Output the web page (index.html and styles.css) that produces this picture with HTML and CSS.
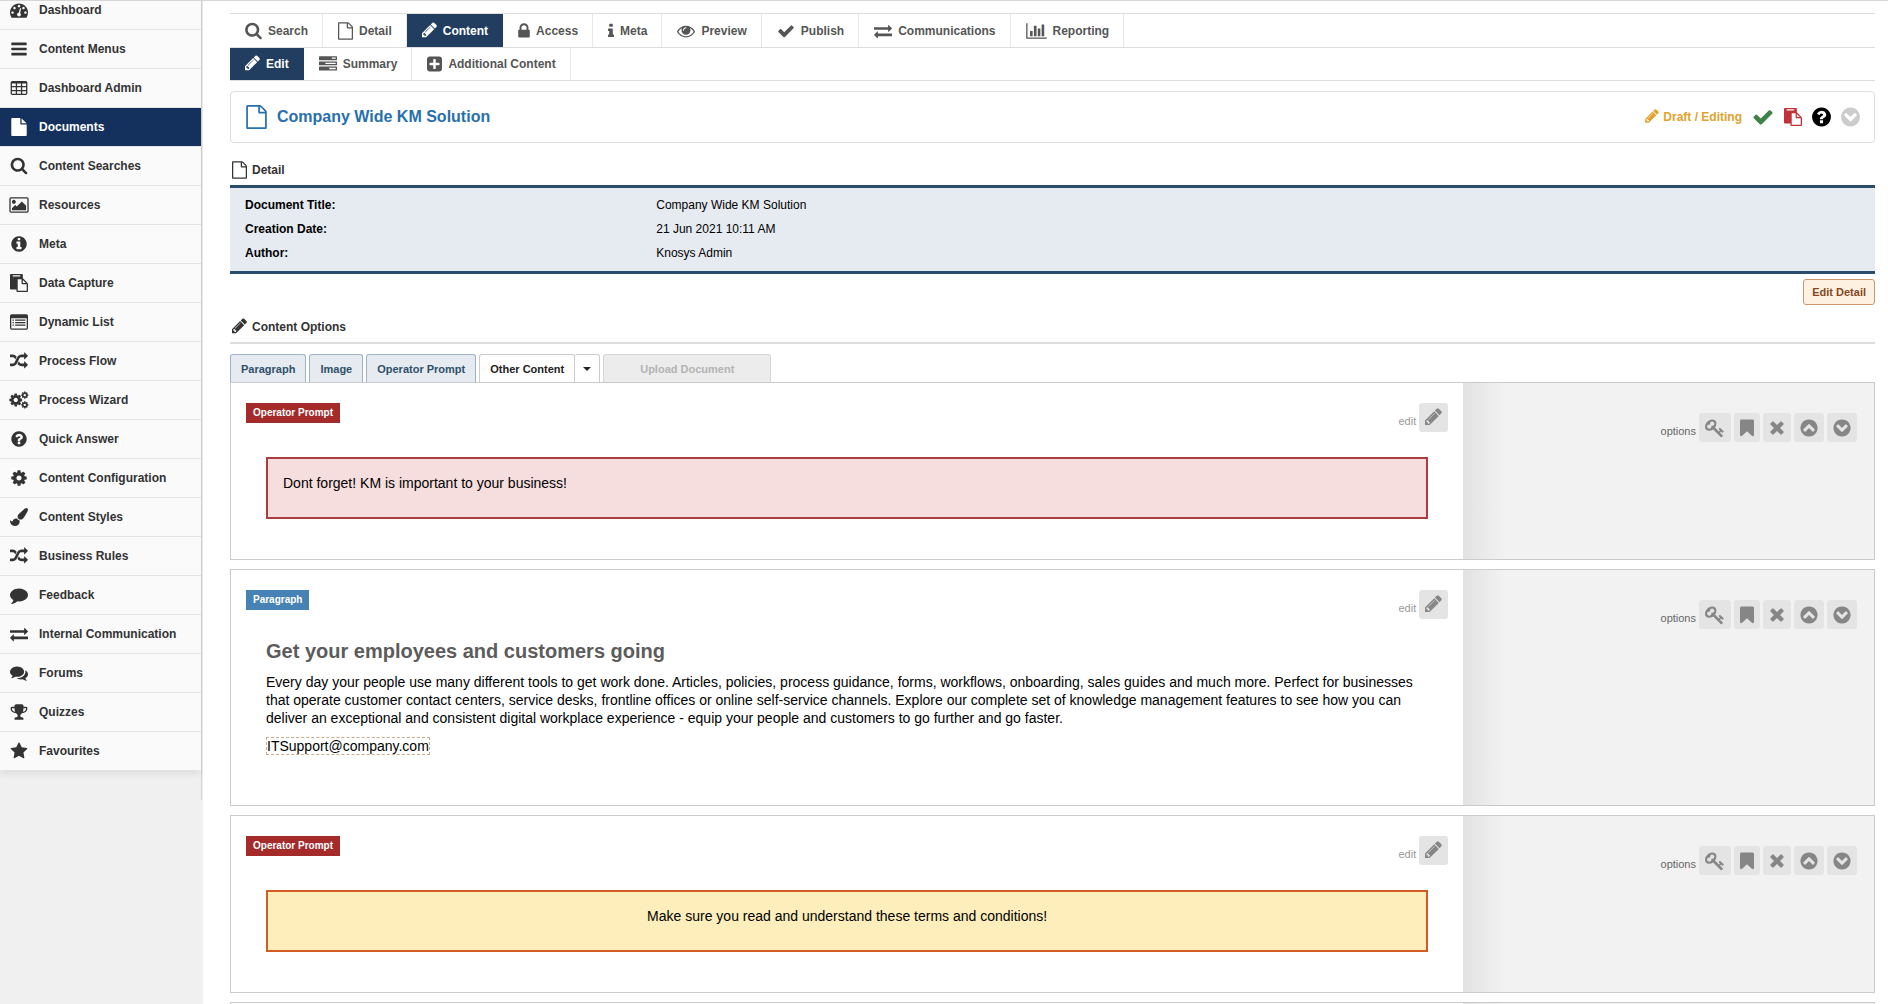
FILE: index.html
```html
<!DOCTYPE html>
<html lang="en">
<head>
  <meta charset="UTF-8">
  <meta name="viewport" content="width=device-width, initial-scale=1.0">
  <title>Company Wide KM Solution</title>
  <link rel="stylesheet" href="styles.css">
</head>
<body>
  <!-- icon sprite -->
  <svg class="sprite" aria-hidden="true">
    <symbol id="i-dashboard" viewBox="0 0 1792 1792"><path d="M384 1152q0-53-37.500-90.500t-90.500-37.500-90.500 37.500-37.500 90.500 37.500 90.500 90.500 37.500 90.500-37.500 37.500-90.500zm192-448q0-53-37.500-90.500t-90.500-37.500-90.500 37.500-37.500 90.500 37.500 90.500 90.500 37.500 90.500-37.500 37.500-90.500zm428 481l101-382q6-26-7.500-48.500t-38.500-29.500-48 6.500-30 39.500l-101 382q-60 5-107 43.500t-63 98.500q-20 77 20 146t117 89 146-20 89-117q16-60-6-117t-72-91zm660-33q0-53-37.500-90.500t-90.500-37.500-90.500 37.500-37.500 90.500 37.500 90.500 90.500 37.500 90.500-37.500 37.500-90.500zm-640-640q0-53-37.500-90.500t-90.500-37.500-90.500 37.500-37.500 90.500 37.500 90.500 90.500 37.500 90.500-37.500 37.500-90.500zm448 192q0-53-37.500-90.500t-90.500-37.500-90.500 37.500-37.500 90.500 37.500 90.500 90.500 37.500 90.500-37.500 37.500-90.500zm320 448q0 261-141 483-19 29-54 29h-1402q-35 0-54-29-141-221-141-483 0-182 71-348t191-286 286-191 348-71 348 71 286 191 191 286 71 348z"/></symbol>
    <symbol id="i-bars" viewBox="0 0 1792 1792"><path d="M1664 1344v128q0 26-19 45t-45 19h-1408q-26 0-45-19t-19-45v-128q0-26 19-45t45-19h1408q26 0 45 19t19 45zm0-512v128q0 26-19 45t-45 19h-1408q-26 0-45-19t-19-45v-128q0-26 19-45t45-19h1408q26 0 45 19t19 45zm0-512v128q0 26-19 45t-45 19h-1408q-26 0-45-19t-19-45v-128q0-26 19-45t45-19h1408q26 0 45 19t19 45z"/></symbol>
    <symbol id="i-table" viewBox="0 0 1792 1792"><path fill-rule="evenodd" d="M224 192h1344q66 0 113 47t47 113v1088q0 66-47 113t-113 47h-1344q-66 0-113-47t-47-113v-1088q0-66 47-113t113-47zM192 448v256h384v-256zM704 448v256h384v-256zM1216 448v256h384v-256zM192 832v256h384v-256zM704 832v256h384v-256zM1216 832v256h384v-256zM192 1216v256h384v-256zM704 1216v256h384v-256zM1216 1216v256h384v-256z"/></symbol>
    <symbol id="i-file" viewBox="128 0 1536 1792"><path d="M1152 512v-472q22 14 36 28l408 408q14 14 28 36h-472zm-128 32q0 40 28 68t68 28h544v1056q0 40-28 68t-68 28h-1344q-40 0-68-28t-28-68v-1600q0-40 28-68t68-28h800v544z"/></symbol>
    <symbol id="i-file-o" viewBox="128 0 1536 1792"><path d="M1596 380q28 28 48 76t20 88v1152q0 40-28 68t-68 28h-1344q-40 0-68-28t-28-68v-1600q0-40 28-68t68-28h896q40 0 88 20t76 48zm-444-244v376h376q-10-29-22-41l-313-313q-12-12-41-22zm384 1528v-1024h-416q-40 0-68-28t-28-68v-416h-768v1536h1280z"/></symbol>
    <symbol id="i-search" viewBox="64 64 1664 1792"><path d="M1216 832q0-185-131.500-316.500t-316.500-131.500-316.500 131.500-131.500 316.500 131.500 316.500 316.500 131.500 316.500-131.500 131.500-316.500zm512 832q0 52-38 90t-90 38q-54 0-90-38l-343-342q-179 124-399 124-143 0-273.500-55.500t-225-150-150-225-55.500-273.500 55.500-273.500 150-225 225-150 273.500-55.500 273.500 55.500 225 150 150 225 55.500 273.500q0 220-124 399l343 343q37 37 37 90z"/></symbol>
    <symbol id="i-image" viewBox="-64 0 1920 1792"><path d="M576 576q0 80-56 136t-136 56-136-56-56-136 56-136 136-56 136 56 56 136zm1024 384v448h-1408v-192l320-320 160 160 512-512zm96-704h-1600q-13 0-22.500 9.500t-9.500 22.500v1216q0 13 9.500 22.500t22.500 9.500h1600q13 0 22.500-9.500t9.500-22.500v-1216q0-13-9.500-22.500t-22.500-9.500zm160 32v1216q0 66-47 113t-113 47h-1600q-66 0-113-47t-47-113v-1216q0-66 47-113t113-47h1600q66 0 113 47t47 113z"/></symbol>
    <symbol id="i-info-circle" viewBox="128 0 1536 1792"><path d="M1152 1376v-160q0-14-9-23t-23-9h-96v-512q0-14-9-23t-23-9h-320q-14 0-23 9t-9 23v160q0 14 9 23t23 9h96v320h-96q-14 0-23 9t-9 23v160q0 14 9 23t23 9h448q14 0 23-9t9-23zm-128-896v-160q0-14-9-23t-23-9h-192q-14 0-23 9t-9 23v160q0 14 9 23t23 9h192q14 0 23-9t9-23zm640 416q0 209-103 385.500t-279.500 279.500-385.500 103-385.500-103-279.500-279.500-103-385.500 103-385.500 279.500-279.500 385.500-103 385.500 103 279.500 279.500 103 385.500z"/></symbol>
    <symbol id="i-paste" viewBox="0 0 1792 1792"><path d="M768 1664h896v-640h-416q-40 0-68-28t-28-68v-416h-384v1152zm256-1440v-64q0-13-9.500-22.500t-22.500-9.500h-704q-13 0-22.500 9.500t-9.500 22.500v64q0 13 9.500 22.500t22.500 9.500h704q13 0 22.500-9.500t9.500-22.500zm256 672h299l-299-299v299zm512 128v672q0 40-28 68t-68 28h-960q-40 0-68-28t-28-68v-160h-544q-40 0-68-28t-28-68v-1344q0-40 28-68t68-28h1088q40 0 68 28t28 68v328q21 13 36 28l408 408q28 28 48 76t20 88z"/></symbol>
    <symbol id="i-list" viewBox="0 0 1792 1792"><path fill-rule="evenodd" d="M160 128h1472q66 0 113 47t47 113v1216q0 66-47 113t-113 47h-1472q-66 0-113-47t-47-113v-1216q0-66 47-113t113-47zM128 512v992q0 32 32 32h1472q32 0 32-32v-992zM256 640h128v128h-128zM256 896h128v128h-128zM256 1152h128v128h-128zM512 640h1024v128h-1024zM512 896h1024v128h-1024zM512 1152h1024v128h-1024z"/></symbol>
    <symbol id="i-random" viewBox="0 0 1792 1792"><path d="M666 481q-60 92-137 273-22-45-37-72.500t-40.500-63.500-51-56.500-63-35-81.500-14.500h-224q-14 0-23-9t-9-23v-192q0-14 9-23t23-9h224q250 0 410 225zm1126 799q0 14-9 23l-320 320q-9 9-23 9-13 0-22.500-9.500t-9.500-22.500v-192q-32 0-85 .5t-81 1-73-1-71-5-64-10.500-63-18.500-58-28.500-59-40-55-53.500-56-69.500q59-93 136-273 22 45 37 72.500t40.500 63.500 51 56.500 63 35 81.500 14.500h256v-192q0-14 9-23t23-9q12 0 24 10l319 319q9 9 9 23zm0-896q0 14-9 23l-320 320q-9 9-23 9-13 0-22.500-9.500t-9.500-22.500v-192h-256q-48 0-87 15t-69 45-51 61.500-45 77.500q-32 62-78 171-29 66-49.500 111t-54 105-64 100-74 83-90 68.500-106.500 42-128 16.500h-224q-14 0-23-9t-9-23v-192q0-14 9-23t23-9h224q48 0 87-15t69-45 51-61.500 45-77.500q32-62 78-171 29-66 49.500-111t54-105 64-100 74-83 90-68.500 106.500-42 128-16.500h256v-192q0-14 9-23t23-9q12 0 24 10l319 319q9 9 9 23z"/></symbol>
    <symbol id="i-cog" viewBox="128 0 1536 1792"><path id="cog-shape" d="M1152 896q0-106-75-181t-181-75-181 75-75 181 75 181 181 75 181-75 75-181zm512-109v222q0 12-8 23t-20 13l-185 28q-19 54-39 91 35 50 107 138 10 12 10 25t-9 23q-27 37-99 108t-94 71q-12 0-26-9l-138-108q-44 23-91 38-16 136-29 186-7 28-36 28h-222q-14 0-24.500-8.500t-11.500-21.500l-28-184q-49-16-90-37l-141 107q-10 9-25 9-14 0-25-11-126-114-165-168-7-10-7-23 0-12 8-23 15-21 51-66.500t54-70.500q-27-50-41-99l-183-27q-13-2-21-12.500t-8-23.500v-222q0-12 8-23t19-13l186-28q14-46 39-92-40-57-107-138-10-12-10-24 0-10 9-23 26-36 98.500-107.500t94.500-71.500q13 0 26 10l138 107q44-23 91-38 16-136 29-186 7-28 36-28h222q14 0 24.500 8.500t11.500 21.500l28 184q49 16 90 37l142-107q9-9 24-9 13 0 25 10 129 119 165 170 7 8 7 22 0 12-8 23-15 21-51 66.500t-54 70.500q26 50 41 98l183 28q13 2 21 12.500t8 23.500z"/></symbol>
    <symbol id="i-cogs" viewBox="0 0 1920 1792"><use href="#cog-shape" transform="translate(-107 150) scale(.83)"/><use href="#cog-shape" transform="translate(1114 -12) scale(.47)"/><use href="#cog-shape" transform="translate(1114 960) scale(.47)"/></symbol>
    <symbol id="i-question" viewBox="128 0 1536 1792"><path d="M1024 1376v-192q0-14-9-23t-23-9h-192q-14 0-23 9t-9 23v192q0 14 9 23t23 9h192q14 0 23-9t9-23zm256-672q0-88-55.500-163t-138.500-116-170-41q-243 0-371 213-15 24 8 42l132 100q7 6 19 6 16 0 25-12 53-68 86-92 34-24 86-24 48 0 85.500 26t37.500 59q0 38-20 61t-68 45q-63 28-115.500 86.500t-52.500 125.500v36q0 14 9 23t23 9h192q14 0 23-9t9-23q0-19 21.500-49.500t54.500-49.500q32-18 49-28.500t46-35 44.500-48 28-60.500 12.500-81zm384 192q0 209-103 385.500t-279.500 279.500-385.500 103-385.500-103-279.500-279.500-103-385.500 103-385.500 279.500-279.500 385.500-103 385.500 103 279.500 279.500 103 385.500z"/></symbol>
    <symbol id="i-brush" viewBox="0 0 1792 1792"><path d="M1615 0q70 0 122.500 46.500t52.500 116.500q0 63-45 151-332 629-465 752-97 91-218 91-126 0-216.500-92.500t-90.500-219.500q0-128 92-212l638-579q59-54 130-54zm-909 1034q39 76 106.500 130t150.500 76l1 71q4 213-129.500 347t-348.500 134q-123 0-218-46.500t-152.500-127.500-86.500-183-29-220q7 5 41 30t62 44.500 59 36.500 46 17q41 0 55-37 25-66 57.500-112.500t69.500-76 88-47.500 103-25.500 125-10.500z"/></symbol>
    <symbol id="i-comment" viewBox="0 0 1792 1792"><path d="M1792 896q0 174-120 321.500t-326 233-450 85.500q-70 0-145-8-198 175-460 242-49 14-114 22-17 2-30.500-9t-17.500-29v-1q-3-4-.5-12t2-10 4.500-9.500l6-9 7-8.500 8-9q7-8 31-34.500t34.500-38 31-39.500 32.500-51 27-59 26-76q-157-89-247.500-220t-90.500-281q0-130 71-248.500t191-204.500 286-136.500 348-50.500q244 0 450 85.500t326 233 120 321.500z"/></symbol>
    <symbol id="i-comments" viewBox="0 0 1792 1792"><path d="M1408 768q0 139-94 257t-256.500 186.500-353.500 68.500q-86 0-176-16-124 88-278 128-36 9-86 16h-3q-11 0-20.500-8t-11.500-21q-1-3-1-6.500t.5-6.500 2-6l2.500-5 3.500-5.500 4-5 4.500-5 4-4.500q5-6 23-25t26-29.500 22.500-29 25-38.500 20.500-44q-124-72-195-177t-71-224q0-139 94-257t256.500-186.500 353.500-68.500 353.500 68.500 256.500 186.500 94 257zm384 256q0 120-71 224.500t-195 176.500q10 24 20.500 44t25 38.500 22.500 29 26 29.500 23 25q1 1 4 4.500t4.500 5 4 5 3.500 5.500l2.500 5 2 6 .5 6.500-1 6.500q-3 14-13 22t-22 7q-50-7-86-16-154-40-278-128-90 16-176 16-271 0-472-132 58 4 88 4 161 0 309-45t264-129q125-92 192-212t67-254q0-77-23-152 129 71 204 178t75 230z"/></symbol>
    <symbol id="i-exchange" viewBox="0 0 1792 1792"><path d="M1792 1184v192q0 13-9.500 22.500t-22.500 9.500h-1376v192q0 13-9.500 22.500t-22.500 9.500q-12 0-24-10l-319-320q-9-9-9-22 0-14 9-23l320-320q9-9 23-9 13 0 22.500 9.500t9.500 22.500v192h1376q13 0 22.500 9.500t9.500 22.500zm0-544q0 14-9 23l-320 320q-9 9-23 9-13 0-22.500-9.500t-9.500-22.500v-192h-1376q-13 0-22.500-9.500t-9.500-22.500v-192q0-13 9.500-22.500t22.500-9.500h1376v-192q0-14 9-23t23-9q12 0 24 10l319 319q9 9 9 23z"/></symbol>
    <symbol id="i-trophy" viewBox="64 0 1664 1792"><path d="M522 883q-74-162-74-371h-256v96q0 78 94.500 162t235.500 113zm1078-275v-96h-256q0 209-74 371 141-29 235.500-113t94.500-162zm128-128v128q0 71-41.500 143t-112 130-173 97.500-215.500 44.500q-42 54-95 95-38 34-52.500 72.500t-14.500 89.500q0 54 30.500 91t97.500 37q75 0 133.500 45.500t58.500 114.500v64q0 14-9 23t-23 9h-832q-14 0-23-9t-9-23v-64q0-69 58.500-114.500t133.500-45.500q67 0 97.500-37t30.500-91q0-51-14.500-89.500t-52.500-72.500q-53-41-95-95-113-5-215.500-44.500t-173-97.500-112-130-41.500-143v-128q0-40 28-68t68-28h288v-96q0-66 47-113t113-47h576q66 0 113 47t47 113v96h288q40 0 68 28t28 68z"/></symbol>
    <symbol id="i-star" viewBox="64 0 1664 1792"><path d="M1728 647q0 22-26 48l-363 354 86 500q1 7 1 20 0 21-10.500 35.500t-30.500 14.500q-19 0-40-12l-449-236-449 236q-22 12-40 12-21 0-31.500-14.500t-10.500-35.500q0-6 2-20l86-500-364-354q-25-27-25-48 0-37 56-46l502-73 225-455q19-41 49-41t49 41l225 455 502 73q56 9 56 46z"/></symbol>
    <symbol id="i-pencil" viewBox="128 128 1536 1792"><path d="M491 1536l91-91-235-235-91 91v107h128v128h107zm523-928q0-22-22-22-10 0-17 7l-542 542q-7 7-7 17 0 22 22 22 10 0 17-7l542-542q7-7 7-17zm-54-192l416 416-832 832h-416v-416zm683 96q0 53-37 90l-166 166-416-416 166-165q36-38 90-38 53 0 91 38l235 234q37 39 37 91z"/></symbol>
    <symbol id="i-lock" viewBox="320 0 1152 1792"><path d="M640 768h512v-192q0-106-75-181t-181-75-181 75-75 181v192zm832 96v576q0 40-28 68t-68 28h-960q-40 0-68-28t-28-68v-576q0-40 28-68t68-28h32v-192q0-184 132-316t316-132 316 132 132 316v192h32q40 0 68 28t28 68z"/></symbol>
    <symbol id="i-info" viewBox="576 0 640 1792"><path d="M1216 1344v128q0 26-19 45t-45 19h-512q-26 0-45-19t-19-45v-128q0-26 19-45t45-19h64v-384h-64q-26 0-45-19t-19-45v-128q0-26 19-45t45-19h384q26 0 45 19t19 45v576h64q26 0 45 19t19 45zm-128-1152v192q0 26-19 45t-45 19h-256q-26 0-45-19t-19-45v-192q0-26 19-45t45-19h256q26 0 45 19t19 45z"/></symbol>
    <symbol id="i-eye" viewBox="0 0 1792 1792"><path d="M1664 960q-152-236-381-353 61 104 61 225 0 185-131.500 316.500t-316.500 131.500-316.500-131.500-131.500-316.500q0-121 61-225-229 117-381 353 133 205 333.500 326.500t434.500 121.500 434.500-121.500 333.500-326.500zm-720-384q0-20-14-34t-34-14q-125 0-214.500 89.500t-89.500 214.500q0 20 14 34t34 14 34-14 14-34q0-86 61-147t147-61q20 0 34-14t14-34zm848 384q0 34-20 69-140 230-376.500 368.500t-499.500 138.500-499.500-139-376.500-368q-20-35-20-69t20-69q140-229 376.500-368t499.500-139 499.500 139 376.500 368q20 35 20 69z"/></symbol>
    <symbol id="i-check" viewBox="0 0 1792 1792"><path d="M1671 566q0 40-28 68l-724 724-136 136q-28 28-68 28t-68-28l-136-136-362-362q-28-28-28-68t28-68l136-136q28-28 68-28t68 28l294 295 656-657q28-28 68-28t68 28l136 136q28 28 28 68z"/></symbol>
    <symbol id="i-chart" viewBox="0 0 2048 1792"><path d="M640 896v512h-256v-512h256zm384-512v1024h-256v-1024h256zm1024 1152v128h-2048v-1536h128v1408h1920zm-640-896v768h-256v-768h256zm384-384v1152h-256v-1152h256z"/></symbol>
    <symbol id="i-tasks" viewBox="0 0 1792 1792"><path d="M1024 1408h640v-128h-640v128zm-384-512h1024v-128h-1024v128zm640-512h384v-128h-384v128zm512 832v256q0 26-19 45t-45 19h-1664q-26 0-45-19t-19-45v-256q0-26 19-45t45-19h1664q26 0 45 19t19 45zm0-512v256q0 26-19 45t-45 19h-1664q-26 0-45-19t-19-45v-256q0-26 19-45t45-19h1664q26 0 45 19t19 45zm0-512v256q0 26-19 45t-45 19h-1664q-26 0-45-19t-19-45v-256q0-26 19-45t45-19h1664q26 0 45 19t19 45z"/></symbol>
    <symbol id="i-plus" viewBox="128 0 1536 1792"><path d="M1408 960v-128q0-26-19-45t-45-19h-320v-320q0-26-19-45t-45-19h-128q-26 0-45 19t-19 45v320h-320q-26 0-45 19t-19 45v128q0 26 19 45t45 19h320v320q0 26 19 45t45 19h128q26 0 45-19t19-45v-320h320q26 0 45-19t19-45zm256-544v960q0 119-84.500 203.500t-203.500 84.500h-960q-119 0-203.500-84.500t-84.500-203.500v-960q0-119 84.500-203.500t203.500-84.500h960q119 0 203.500 84.500t84.500 203.500z"/></symbol>
    <symbol id="i-key" viewBox="0 0 1792 1792"><path d="M832 512q0-80-56-136t-136-56-136 56-56 136q0 42 19 83-41-19-83-19-80 0-136 56t-56 136 56 136 136 56 136-56 56-136q0-42-19-83 41 19 83 19 80 0 136-56t56-136zm851 704q0 17-49 66t-66 49q-9 0-28.500-16t-36.500-33-38.500-40-24.500-26l-96 96 220 220q28 28 28 68 0 42-39 81t-81 39q-40 0-68-28l-671-671q-176 131-365 131-163 0-265.500-102.500t-102.500-265.500q0-160 95-313t248-248 313-95q163 0 265.500 102.500t102.500 265.500q0 189-131 365l355 355 96-96q-3-3-26-24.500t-40-38.500-33-36.500-16-28.500q0-17 49-66t66-49q13 0 23 10 6 6 46 44.500t82 79.500 86.500 86 73 78 28.500 41z"/></symbol>
    <symbol id="i-bookmark" viewBox="256 0 1280 1792"><path d="M1420 128q23 0 44 9 33 13 52.500 41t19.500 62v1289q0 34-19.500 62t-52.500 41q-19 8-44 8-48 0-83-32l-441-424-441 424q-36 33-83 33-23 0-44-9-33-13-52.500-41t-19.500-62v-1289q0-34 19.500-62t52.500-41q21-9 44-9h1048z"/></symbol>
    <symbol id="i-times" viewBox="192 64 1408 1792"><path d="M1490 1322q0 40-28 68l-136 136q-28 28-68 28t-68-28l-294-294-294 294q-28 28-68 28t-68-28l-136-136q-28-28-28-68t28-68l294-294-294-294q-28-28-28-68t28-68l136-136q28-28 68-28t68 28l294 294 294-294q28-28 68-28t68 28l136 136q28 28 28 68t-28 68l-294 294 294 294q28 28 28 68z"/></symbol>
    <symbol id="i-down" viewBox="128 0 1536 1792"><path id="chevron-shape" d="M941 1236l454-454q19-19 19-45t-19-45l-102-102q-19-19-45-19t-45 19l-307 307-307-307q-19-19-45-19t-45 19l-102 102q-19 19-19 45t19 45l454 454q19 19 45 19t45-19zm723-340q0 209-103 385.500t-279.500 279.500-385.500 103-385.500-103-279.500-279.500-103-385.500 103-385.500 279.500-279.500 385.500-103 385.500 103 279.500 279.500 103 385.500z"/></symbol>
    <symbol id="i-up" viewBox="128 0 1536 1792"><use href="#chevron-shape" transform="rotate(180 896 896)"/></symbol>
  </svg>

  <div class="page">
    <aside class="sidebar">
      <nav class="side-nav">
        <ul>
          <li><a href="#"><svg><use href="#i-dashboard"/></svg>Dashboard</a></li>
          <li><a href="#"><svg><use href="#i-bars"/></svg>Content Menus</a></li>
          <li><a href="#"><svg><use href="#i-table"/></svg>Dashboard Admin</a></li>
          <li class="active"><a href="#"><svg><use href="#i-file"/></svg>Documents</a></li>
          <li><a href="#"><svg><use href="#i-search"/></svg>Content Searches</a></li>
          <li><a href="#"><svg><use href="#i-image"/></svg>Resources</a></li>
          <li><a href="#"><svg><use href="#i-info-circle"/></svg>Meta</a></li>
          <li><a href="#"><svg><use href="#i-paste"/></svg>Data Capture</a></li>
          <li><a href="#"><svg><use href="#i-list"/></svg>Dynamic List</a></li>
          <li><a href="#"><svg><use href="#i-random"/></svg>Process Flow</a></li>
          <li><a href="#"><svg><use href="#i-cogs"/></svg>Process Wizard</a></li>
          <li><a href="#"><svg><use href="#i-question"/></svg>Quick Answer</a></li>
          <li><a href="#"><svg><use href="#i-cog"/></svg>Content Configuration</a></li>
          <li><a href="#"><svg><use href="#i-brush"/></svg>Content Styles</a></li>
          <li><a href="#"><svg><use href="#i-random"/></svg>Business Rules</a></li>
          <li><a href="#"><svg><use href="#i-comment"/></svg>Feedback</a></li>
          <li><a href="#"><svg><use href="#i-exchange"/></svg>Internal Communication</a></li>
          <li><a href="#"><svg><use href="#i-comments"/></svg>Forums</a></li>
          <li><a href="#"><svg><use href="#i-trophy"/></svg>Quizzes</a></li>
          <li><a href="#"><svg><use href="#i-star"/></svg>Favourites</a></li>
        </ul>
      </nav>
    </aside>

    <main class="main">
      <nav class="tabs">
        <a href="#"><svg class="w17"><use href="#i-search"/></svg>Search</a>
        <a href="#"><svg class="w15"><use href="#i-file-o"/></svg>Detail</a>
        <a href="#" class="active"><svg class="w15"><use href="#i-pencil"/></svg>Content</a>
        <a href="#"><svg class="w12"><use href="#i-lock"/></svg>Access</a>
        <a href="#"><svg class="w6"><use href="#i-info"/></svg>Meta</a>
        <a href="#"><svg><use href="#i-eye"/></svg>Preview</a>
        <a href="#"><svg><use href="#i-check"/></svg>Publish</a>
        <a href="#"><svg><use href="#i-exchange"/></svg>Communications</a>
        <a href="#"><svg class="w21"><use href="#i-chart"/></svg>Reporting</a>
      </nav>
      <nav class="tabs sub-tabs">
        <a href="#" class="active"><svg class="w15"><use href="#i-pencil"/></svg>Edit</a>
        <a href="#"><svg><use href="#i-tasks"/></svg>Summary</a>
        <a href="#"><svg class="w15"><use href="#i-plus"/></svg>Additional Content</a>
      </nav>

      <header class="title-bar">
        <h1><svg><use href="#i-file-o"/></svg>Company Wide KM Solution</h1>
        <div class="status">
          <span class="draft"><svg><use href="#i-pencil"/></svg>Draft / Editing</span>
          <button type="button" class="s-check" aria-label="Approve"><svg><use href="#i-check"/></svg></button>
          <button type="button" class="s-paste" aria-label="Copy"><svg><use href="#i-paste"/></svg></button>
          <button type="button" class="s-help" aria-label="Help"><svg><use href="#i-question"/></svg></button>
          <button type="button" class="s-more" aria-label="More"><svg><use href="#i-down"/></svg></button>
        </div>
      </header>

      <section class="detail">
        <h2 class="section-title"><svg><use href="#i-file-o"/></svg>Detail</h2>
        <dl>
          <dt>Document Title:</dt><dd>Company Wide KM Solution</dd>
          <dt>Creation Date:</dt><dd>21 Jun 2021 10:11 AM</dd>
          <dt>Author:</dt><dd>Knosys Admin</dd>
        </dl>
        <div class="detail-actions">
          <button type="button" class="btn-edit-detail">Edit Detail</button>
        </div>
      </section>

      <section class="options">
        <h2 class="section-title"><svg><use href="#i-pencil"/></svg>Content Options</h2>
        <div class="content-tabs">
          <button type="button">Paragraph</button>
          <button type="button">Image</button>
          <button type="button">Operator Prompt</button>
          <div class="split">
            <button type="button">Other Content</button>
            <button type="button" class="toggle" aria-label="More content types"><span class="caret"></span></button>
          </div>
          <button type="button" class="upload" disabled>Upload Document</button>
        </div>

        <article class="block">
          <div class="block-content">
            <div class="block-head">
              <span class="badge badge-prompt">Operator Prompt</span>
              <div class="tools"><span>edit</span><button type="button" aria-label="edit"><svg class="w17"><use href="#i-pencil"/></svg></button></div>
            </div>
            <div class="block-body">
              <div class="prompt prompt-red">Dont forget! KM is important to your business!</div>
            </div>
          </div>
          <div class="block-side">
            <div class="tools">
              <span>options</span>
              <button type="button" aria-label="Keywords"><svg class="w20"><use href="#i-key"/></svg></button>
              <button type="button" aria-label="Bookmark"><svg class="w14"><use href="#i-bookmark"/></svg></button>
              <button type="button" aria-label="Delete"><svg class="w16"><use href="#i-times"/></svg></button>
              <button type="button" aria-label="Move up"><svg><use href="#i-up"/></svg></button>
              <button type="button" aria-label="Move down"><svg><use href="#i-down"/></svg></button>
            </div>
          </div>
        </article>

        <article class="block">
          <div class="block-content">
            <div class="block-head">
              <span class="badge badge-paragraph">Paragraph</span>
              <div class="tools"><span>edit</span><button type="button" aria-label="edit"><svg class="w17"><use href="#i-pencil"/></svg></button></div>
            </div>
            <div class="block-body">
              <h3>Get your employees and customers going</h3>
              <p>Every day your people use many different tools to get work done. Articles, policies, process guidance, forms, workflows, onboarding, sales guides and much more. Perfect for businesses that operate customer contact centers, service desks, frontline offices or online self-service channels. Explore our complete set of knowledge management features to see how you can deliver an exceptional and consistent digital workplace experience - equip your people and customers to go further and go faster.</p>
              <p><a class="email" href="mailto:ITSupport@company.com">ITSupport@company.com</a></p>
            </div>
          </div>
          <div class="block-side">
            <div class="tools">
              <span>options</span>
              <button type="button" aria-label="Keywords"><svg class="w20"><use href="#i-key"/></svg></button>
              <button type="button" aria-label="Bookmark"><svg class="w14"><use href="#i-bookmark"/></svg></button>
              <button type="button" aria-label="Delete"><svg class="w16"><use href="#i-times"/></svg></button>
              <button type="button" aria-label="Move up"><svg><use href="#i-up"/></svg></button>
              <button type="button" aria-label="Move down"><svg><use href="#i-down"/></svg></button>
            </div>
          </div>
        </article>

        <article class="block">
          <div class="block-content">
            <div class="block-head">
              <span class="badge badge-prompt">Operator Prompt</span>
              <div class="tools"><span>edit</span><button type="button" aria-label="edit"><svg class="w17"><use href="#i-pencil"/></svg></button></div>
            </div>
            <div class="block-body">
              <div class="prompt prompt-yellow">Make sure you read and understand these terms and conditions!</div>
            </div>
          </div>
          <div class="block-side">
            <div class="tools">
              <span>options</span>
              <button type="button" aria-label="Keywords"><svg class="w20"><use href="#i-key"/></svg></button>
              <button type="button" aria-label="Bookmark"><svg class="w14"><use href="#i-bookmark"/></svg></button>
              <button type="button" aria-label="Delete"><svg class="w16"><use href="#i-times"/></svg></button>
              <button type="button" aria-label="Move up"><svg><use href="#i-up"/></svg></button>
              <button type="button" aria-label="Move down"><svg><use href="#i-down"/></svg></button>
            </div>
          </div>
        </article>

        <article class="block">
          <div class="block-content"></div>
          <div class="block-side"></div>
        </article>
      </section>
    </main>
  </div>
</body>
</html>
```

FILE: styles.css
```css
* {
  box-sizing: border-box;
}
body {
  margin: 0;
  height: 100vh;
  overflow: hidden;
  font-family: Arial, "Liberation Sans", sans-serif;
  font-size: 12px;
  color: #000;
  background-color: #fff;
}
h1, h2, h3, p, ul, dl, dd {
  margin: 0;
  padding: 0;
}
a {
  color: inherit;
  text-decoration: none;
}
button {
  font-family: inherit;
  margin: 0;
  padding: 0;
  border: none;
  background: none;
  cursor: pointer;
}
svg {
  display: block;
  flex: none;
  width: 18px;
  height: 18px;
  fill: currentColor;
}
.sprite {
  display: none;
}
.w6 { width: 6px; }
.w12 { width: 12px; }
.w14 { width: 14px; }
.w15 { width: 15px; }
.w16 { width: 16px; }
.w17 { width: 17px; }
.w20 { width: 20px; }
.w21 { width: 21px; }
.page {
  display: flex;
  height: 100%;
  border-top: 1px solid #d6d6d8;
}

/* Sidebar */
.sidebar {
  flex: none;
  width: 203px;
  overflow: hidden;
  background-color: #f0f0f0;
}
.side-nav {
  width: 202px;
  margin-top: -10px;
  padding-bottom: 30px;
  border-right: 1px solid #d4d4d4;
}
.side-nav ul {
  list-style: none;
  background-color: #fafafa;
  box-shadow: 0 4px 8px rgba(0, 0, 0, 0.08);
}
.side-nav li {
  border-bottom: 1px solid #e4e5e6;
}
.side-nav li:last-child {
  border-bottom: none;
}
.side-nav a {
  display: flex;
  align-items: center;
  gap: 10px;
  height: 38px;
  padding-left: 9px;
  font-weight: bold;
  color: #333;
}
.side-nav svg {
  width: 20px;
}
.side-nav .active a {
  color: #fff;
  background-color: #14315e;
}

/* Top navigation */
.main {
  flex: 1;
  min-width: 0;
  overflow: hidden;
  padding: 12px 13px 0 27px;
}
.tabs {
  display: flex;
  border-top: 1px solid #ddd;
  border-bottom: 1px solid #ddd;
}
.sub-tabs {
  border-top: none;
}
.tabs a {
  display: flex;
  align-items: center;
  gap: 6px;
  height: 33px;
  padding: 0 14px 0 15px;
  border-right: 1px solid #e8e8e8;
  font-weight: bold;
  color: #555;
}
.sub-tabs a {
  height: 32px;
}
.tabs .active {
  color: #fff;
  background-color: #213e60;
  border-right-color: #213e60;
}

/* Document title */
.title-bar {
  display: flex;
  align-items: center;
  justify-content: space-between;
  height: 52px;
  margin-top: 10px;
  padding: 0 14px 0 15px;
  border: 1px solid #ddd;
  border-radius: 4px;
}
.title-bar h1 {
  display: flex;
  align-items: center;
  gap: 10px;
  font-size: 16px;
  color: #286fad;
}
.title-bar h1 svg {
  width: 21px;
  height: 24px;
}
.status {
  display: flex;
  align-items: center;
  gap: 10px;
}
.draft {
  display: flex;
  align-items: center;
  gap: 4px;
  font-weight: bold;
  color: #e0a32c;
}
.draft svg {
  width: 14px;
  height: 16px;
}
.status button svg {
  width: 19px;
  height: 22px;
}
.status .s-check svg {
  width: 22px;
}
.s-check { color: #3f8247; }
.s-paste { color: #c03237; }
.status .s-paste svg {
  width: 18px;
  height: 18px;
}
.s-help { color: #000; }
.s-more { color: #ccc; }

/* Detail */
.section-title {
  display: flex;
  align-items: center;
  gap: 5px;
  padding-left: 2px;
  font-size: 12px;
  color: #333;
}
.section-title svg {
  width: 15px;
}
.detail .section-title {
  margin: 18px 0 6px;
}
.detail dl {
  display: grid;
  grid-template-columns: 25% 1fr;
  padding: 5px 0 6px;
  line-height: 24px;
  background-color: #e6ebf2;
  border-top: 3px solid #2a4d6c;
  border-bottom: 3px solid #2a4d6c;
}
.detail dt,
.detail dd {
  padding-left: 15px;
}
.detail dt {
  font-weight: bold;
}
.detail-actions {
  display: flex;
  justify-content: flex-end;
  margin-top: 5px;
}
.btn-edit-detail {
  height: 26px;
  padding: 0 8px;
  font-size: 11px;
  font-weight: bold;
  color: #87461c;
  background-color: #fdf2e2;
  border: 1px solid #c9976d;
  border-radius: 3px;
}

/* Content options */
.options .section-title {
  margin-top: 13px;
  padding-bottom: 6px;
  border-bottom: 2px solid #ddd;
}
.content-tabs {
  display: flex;
  gap: 3px;
  margin-top: 10px;
}
.content-tabs button {
  height: 28px;
  padding: 0 10px;
  font-size: 11px;
  font-weight: bold;
  color: #2f5069;
  background-color: #e6ebf1;
  border: 1px solid #9fb2cc;
  border-bottom: none;
  border-radius: 3px 3px 0 0;
}
.content-tabs .split {
  display: flex;
}
.content-tabs .split button {
  color: #222;
  background-color: #fff;
  border-color: #ccc;
}
.content-tabs .split .toggle {
  border-left: none;
  padding: 0 8px;
}
.caret {
  display: block;
  border: 4px solid transparent;
  border-top-color: #222;
  border-bottom: none;
}
.content-tabs .upload {
  padding: 0 36px;
  color: #b3b3b3;
  background-color: #ececec;
  border-color: #d6d6d6;
}

/* Content blocks */
.block {
  display: flex;
  min-height: 178px;
  margin-bottom: 9px;
  border: 1px solid #c9cbcc;
}
.block-content {
  width: 75%;
  padding: 20px 15px 0;
}
.block-head {
  display: flex;
  align-items: flex-start;
  justify-content: space-between;
}
.badge {
  padding: 0 7px;
  font-size: 10px;
  font-weight: bold;
  line-height: 20px;
  color: #fff;
}
.badge-prompt { background-color: #a52a2a; }
.badge-paragraph { background-color: #4682b4; }
.block-body {
  padding: 20px 20px 40px;
  font-size: 14px;
  line-height: 18px;
}
.block-body h3 {
  margin-bottom: 10px;
  font-size: 20px;
  line-height: 24px;
  color: #5c5c5c;
}
.block-body p {
  margin-bottom: 10px;
}
.email {
  border: 1px dashed #c9ac8c;
}
.prompt {
  margin-top: 5px;
  padding: 15px 15px 25px;
  border: 2px solid;
}
.prompt-red {
  background-color: #f6dede;
  border-color: #b03a3f;
}
.prompt-yellow {
  text-align: center;
  background-color: #feeebb;
  border-color: #d15d20;
}
.block-side {
  width: 25%;
  padding: 30px 17px 0;
  background: linear-gradient(to right, #e2e2e2, #f2f2f2 42px);
}
.tools {
  display: flex;
  align-items: flex-end;
  justify-content: flex-end;
  gap: 3px;
  font-size: 11px;
  line-height: 22px;
  color: #999;
}
.block-side .tools {
  color: #666;
}
.tools button {
  padding: 5px 6px 4px;
  color: #868686;
  background-color: #e4e4e4;
  border-radius: 3px;
}
.tools svg {
  height: 20px;
}
```
